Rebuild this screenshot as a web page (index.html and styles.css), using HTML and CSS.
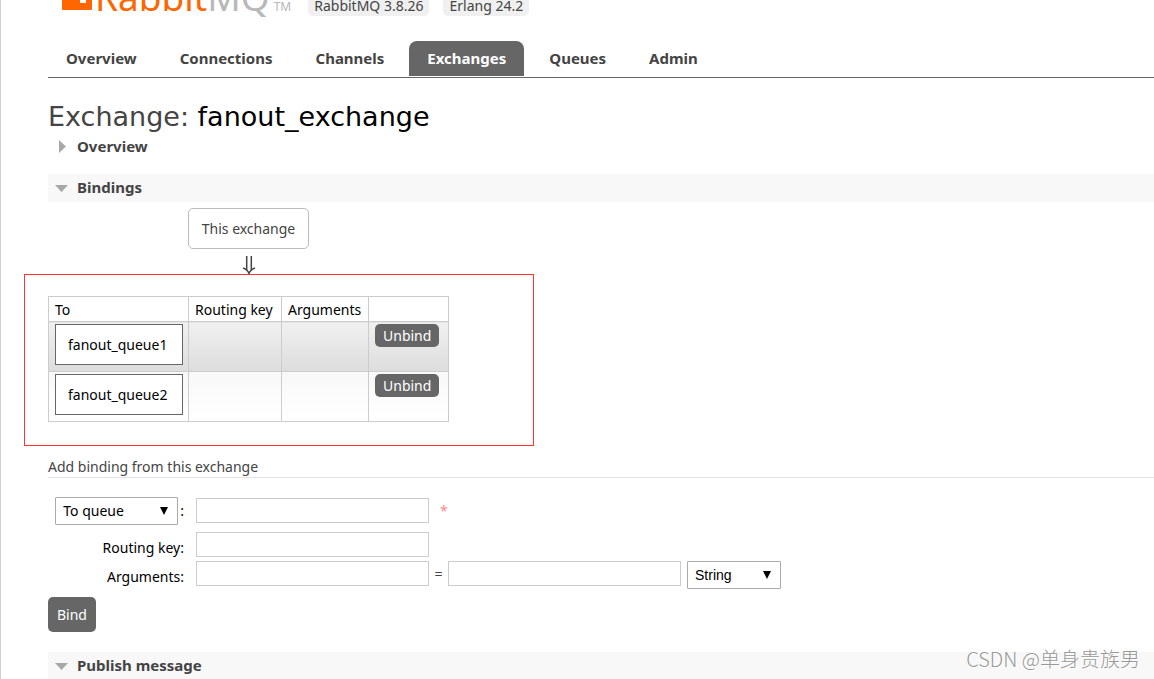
FILE: index.html
```html
<!DOCTYPE html>
<html lang="en">
<head>
<meta charset="utf-8">
<meta name="viewport" content="width=device-width, initial-scale=1">
<title>RabbitMQ Management</title>
<link rel="stylesheet" href="styles.css">
</head>
<body>
<div class="page">
  <header class="header">
    <a class="logo" href="#">
      <svg class="logo-mark" viewBox="0 0 30 32" aria-hidden="true"><path fill="#f60" d="M1 0h8q1 0 1 1v11q0 1 1 1h5q1 0 1-1V1q0-1 1-1h8q1 0 1 1v11h2q1 0 1 1v18q0 1-1 1H1q-1 0-1-1V1q0-1 1-1z"/><rect x="18" y="19" width="6" height="6" rx="1" fill="#fff"/></svg>
      <span class="logo-name">Rabbit<span class="logo-mq">MQ</span></span>
      <span class="logo-tm">TM</span>
    </a>
    <span class="version">RabbitMQ 3.8.26</span>
    <span class="version">Erlang 24.2</span>
  </header>

  <nav class="tabs">
    <a class="tab" href="#">Overview</a>
    <a class="tab" href="#">Connections</a>
    <a class="tab" href="#">Channels</a>
    <a class="tab tab--active" href="#" aria-current="page">Exchanges</a>
    <a class="tab" href="#">Queues</a>
    <a class="tab" href="#">Admin</a>
  </nav>

  <main>
    <h1 class="title">Exchange: <b class="title-name">fanout_exchange</b></h1>

    <h2 class="section section--closed"><button class="section-toggle" type="button" aria-expanded="false"><svg class="marker" viewBox="0 0 13 13" aria-hidden="true"><path fill="#a8a8a8" d="M4 0l7 6.500L4 13z"/></svg>Overview</button></h2>

    <h2 class="section"><button class="section-toggle" type="button" aria-expanded="true"><svg class="marker" viewBox="0 0 13 13" aria-hidden="true"><path fill="#a8a8a8" d="M0 4h13L6.500 11z"/></svg>Bindings</button></h2>
    <div class="bindings">
      <div class="exchange">This exchange</div>
      <svg class="arrow" viewBox="0 0 14 20" aria-hidden="true"><path fill="none" stroke="#444" stroke-width="1.500" d="M4.700 1v14.500M9.300 1v14.500M1 13q4.500 1.500 6 5.500q1.500-4 6-5.500"/></svg>
      <div class="table-wrap">
        <table class="list">
          <thead>
            <tr><th class="col-to">To</th><th class="col-key">Routing key</th><th class="col-args">Arguments</th><th class="col-action"></th></tr>
          </thead>
          <tbody>
            <tr class="row-alt"><td><a class="queue" href="#">fanout_queue1</a></td><td></td><td></td><td><button class="button button--small" type="button">Unbind</button></td></tr>
            <tr class="row"><td><a class="queue" href="#">fanout_queue2</a></td><td></td><td></td><td><button class="button button--small" type="button">Unbind</button></td></tr>
          </tbody>
        </table>
        <div class="highlight"></div>
      </div>
    </div>

    <h3 class="subtitle">Add binding from this exchange</h3>
    <form class="form">
      <div class="field field--target">
        <div class="label">
          <span class="select-wrap select-wrap--wide"><select class="select" aria-label="Destination type"><option>To queue</option><option>To exchange</option></select><svg class="caret" viewBox="0 0 8 8" aria-hidden="true"><path d="M0 0h8L4 8z"/></svg></span><label for="dest">:</label>
        </div>
        <div class="controls"><input class="input" id="dest" type="text" required><span class="required">*</span></div>
      </div>
      <div class="field">
        <label class="label" for="key">Routing key:</label>
        <div class="controls"><input class="input" id="key" type="text"></div>
      </div>
      <div class="field">
        <label class="label" for="arg">Arguments:</label>
        <div class="controls">
          <input class="input" id="arg" type="text"><span class="equals">=</span><input class="input" type="text" aria-label="Argument value">
          <span class="select-wrap select-wrap--type"><select class="select select--arial" aria-label="Argument type"><option>String</option><option>Number</option><option>Boolean</option></select><svg class="caret" viewBox="0 0 8 8" aria-hidden="true"><path d="M0 0h8L4 8z"/></svg></span>
        </div>
      </div>
      <button class="button button--submit" type="button">Bind</button>
    </form>

    <h2 class="section"><button class="section-toggle" type="button" aria-expanded="true"><svg class="marker" viewBox="0 0 13 13" aria-hidden="true"><path fill="#a8a8a8" d="M0 4h13L6.500 11z"/></svg>Publish message</button></h2>
  </main>
</div>
<div class="watermark">CSDN @单身贵族男</div>
</body>
</html>
```
FILE: styles.css
```css
* { box-sizing: border-box; }
html { overflow: hidden; }
body {
  margin: 0;
  background: #fff;
  color: #444;
  font-family: "Noto Sans", Verdana, sans-serif;
  font-size: 14px;
  line-height: 20px;
}
a { color: inherit; text-decoration: none; }
button, input, select { font: inherit; }

.page { padding-left: 47px; border-left: 1px solid #d0d0e0; }

.header { display: flex; align-items: flex-end; height: 16px; }
.logo { display: flex; align-items: flex-end; height: 16px; margin-left: 14px; margin-right: 17px; }
.logo-mark { width: 30px; height: 32px; margin-bottom: 6px; margin-right: 3px; }
.logo-name { color: #f60; font-size: 37px; line-height: 38px; }
.logo-mq { color: #b8b8b8; }
.logo-tm { color: #b8b8b8; font-size: 12px; line-height: 18px; margin-left: 4px; }
.version { padding: 0 6px; margin-right: 14px; border-radius: 5px; background: #f0f0f0; }

.tabs { display: flex; margin-top: 25px; padding-bottom: 1px; border-bottom: 1px solid #666; }
.tab { padding: 7px 18px 8px; margin-right: 7px; border-radius: 8px 8px 0 0; font-size: 15px; font-weight: bold; }
.tab--active { background: #666; color: #fff; }

.title { margin: 22px 0 0; font-family: "DejaVu Sans", sans-serif; font-size: 27px; line-height: 33px; font-weight: normal; }
.title-name { color: #000; font-weight: normal; }

.section { margin: 20px 0 0; background: #f8f8f8; font-size: 15px; line-height: 20px; }
.section--closed { margin: 0 0 13px; background: none; }
.section-toggle { display: flex; align-items: center; gap: 9px; width: 100%; padding: 3px 7px 5px; border: 0; background: none; color: inherit; text-align: left; font-weight: bold; }
.section--closed + .section { margin-top: 0; }
.marker { width: 13px; height: 13px; }

.bindings { display: flex; flex-direction: column; align-items: center; width: fit-content; margin-top: 6px; }
.exchange { padding: 10px 13px; border: 1px solid #bbb; border-radius: 5px; line-height: 19px; }
.arrow { width: 14px; height: 20px; margin: 6px 0 21px; }
.table-wrap { position: relative; }
.highlight { position: absolute; inset: -22px -85px -24px -24px; border: 1px solid #f33; pointer-events: none; }
.list { border-collapse: collapse; color: #000; }
.list th, .list td { padding: 2px 5px 6px 6px; border: 1px solid #ccc; text-align: left; vertical-align: top; }
.list th { padding: 3px 5px 2px 6px; font-weight: normal; line-height: 19px; }
.col-to { width: 140px; }
.col-key { width: 93px; }
.col-args { width: 87px; }
.col-action { width: 80px; }
.row-alt td { background: linear-gradient(#f0f0f0, #ddd); }
.row td { background: linear-gradient(#f8f8f8, #fff); }
.queue { display: block; padding: 10px 12px; border: 1px solid #666; background: #fff; line-height: 19px; }

.button { border: 0; border-radius: 5px; background: #666; color: #fff; }
.button--small { display: block; padding: 2px 8px; line-height: 19px; }
.button--submit { margin-top: 5px; padding: 8px 9px; line-height: 19px; }

.subtitle { margin: 35px 0 19px; border-bottom: 1px solid #e4e4e4; font-size: 14px; font-weight: normal; line-height: 20px; }
.form { color: #000; }
.field { display: grid; grid-template-columns: 136px 1fr; column-gap: 12px; margin-bottom: 3px; }
.field--target { margin-bottom: 7px; }
.label { padding-top: 6px; text-align: right; }
.field--target .label { display: flex; justify-content: flex-end; align-items: center; gap: 2px; padding: 0; }
.controls { display: flex; align-items: flex-start; }
.field--target .controls { align-items: center; padding-bottom: 1px; }
.input { width: 233px; height: 25px; padding: 2px; border: 1px solid #ccc; background: #fff; }
.equals { width: 19px; text-align: center; line-height: 25px; color: #444; }
.required { margin-left: 11px; color: #f88; }
.select-wrap { position: relative; display: block; height: 28px; }
.select-wrap--wide { width: 123px; }
.select-wrap--type { width: 94px; margin-left: 6px; }
.select { display: block; appearance: none; width: 100%; height: 28px; padding: 0 7px; border: 1px solid #aaa; border-radius: 1px; background: #fff; color: #000; }
.select--arial { font-family: "Liberation Sans", Arial, sans-serif; }
.caret { position: absolute; right: 10px; top: 10px; width: 8px; height: 8px; pointer-events: none; }

.watermark { position: absolute; right: 14px; bottom: 5px; color: #999; font-family: "Noto Sans CJK SC", sans-serif; font-size: 20px; font-weight: 300; line-height: 30px; text-shadow: 1px 1px 0 #fff; }
```
